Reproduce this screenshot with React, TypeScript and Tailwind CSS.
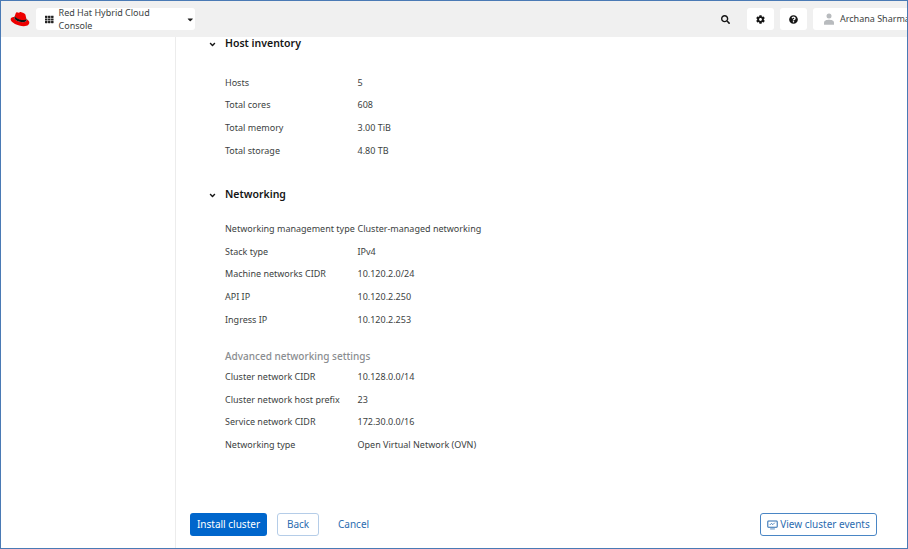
import { FaSearch, FaCog, FaQuestionCircle, FaCaretDown, FaAngleDown, FaTh } from "react-icons/fa";

const inventory = [
  ["Hosts", "5"],
  ["Total cores", "608"],
  ["Total memory", "3.00 TiB"],
  ["Total storage", "4.80 TB"],
];

const networking = [
  ["Networking management type", "Cluster-managed networking"],
  ["Stack type", "IPv4"],
  ["Machine networks CIDR", "10.120.2.0/24"],
  ["API IP", "10.120.2.250"],
  ["Ingress IP", "10.120.2.253"],
];

const advanced = [
  ["Cluster network CIDR", "10.128.0.0/14"],
  ["Cluster network host prefix", "23"],
  ["Service network CIDR", "172.30.0.0/16"],
  ["Networking type", "Open Virtual Network (OVN)"],
];

function Rows({ rows }: { rows: string[][] }) {
  return (
    <div className="flex flex-col">
      {rows.map(([label, value]) => (
        <div key={label} className="flex h-[22.8px] items-center text-[9px] text-[#3c3f42]">
          <span className="w-[132.5px] shrink-0">{label}</span>
          <span>{value}</span>
        </div>
      ))}
    </div>
  );
}

function Section({ title }: { title: string }) {
  return (
    <div className="flex h-[14px] items-center text-[#151515]">
      <FaAngleDown className="ml-[-17px] mr-[8px] h-[9px] w-[9px]" />
      <span className="text-[10.5px] font-semibold">{title}</span>
    </div>
  );
}

function RedHat() {
  return (
    <svg viewBox="0 0 32 24" className="h-[15px] w-[20px]">
      <path
        fill="#e00"
        d="M21 13c2 0 5-.3 5-2.800 0-.2 0-.4-.1-.6L24.700 4.400C24.400 3.300 24.200 2.800 22.200 1.800 20.700 1 17.300 0 16.300 0c-1 0-1.200 1.200-2.300 1.200C12.900 1.200 12.100.3 11.100.3c-1 0-1.600.7-2.100 2 0 0-1.300 3.800-1.500 4.400v.3c0 1.500 5.800 6 13.500 6zm5.200-1.800c.3 1.300.3 1.500.3 1.600 0 2.200-2.500 3.500-5.800 3.500C13.200 16.300 6.900 12 6.900 9.200c0-.4.100-.8.300-1.200C4.500 8.100 1 8.600 1 11.600 1 16.600 12.700 22.700 22 22.700c7.100 0 8.900-3.200 8.900-5.800 0-2-1.800-4.300-4.700-5.700z"
      />
      <path fill="#111" d="M26.200 11.200c.3 1.300.3 1.500.3 1.600 0 2.200-2.500 3.500-5.800 3.500C13.200 16.300 6.900 12 6.900 9.200c0-.4.100-.8.300-1.200l.6-1.500v.4c0 1.500 5.800 6 13.200 6 2 0 5-.300 5-2.800z" />
    </svg>
  );
}

export default function App() {
  return (
    <div className="flex h-[549px] w-[908px] flex-col overflow-hidden border border-[#4a7ab5] bg-white font-['Noto_Sans',sans-serif]">
      <header className="flex h-[36px] shrink-0 items-center bg-[#f0f0f0]">
        <div className="ml-[9px] mr-[6px]">
          <RedHat />
        </div>
        <div className="flex h-[22px] w-[159px] items-center rounded-[3px] bg-white pl-[9px] text-[9px] text-[#3c3f42]">
          <FaTh className="h-[9px] w-[9px] text-[#222]" />
          <span className="ml-[5px]">Red Hat Hybrid Cloud Console</span>
          <FaCaretDown className="ml-[7px] h-[9px] w-[9px] text-[#222]" />
        </div>
        <div className="ml-auto flex items-center">
          <FaSearch className="mr-[17px] h-[9px] w-[9px] text-[#151515]" />
          <div className="mr-[6px] flex h-[22px] w-[27px] items-center justify-center rounded-[3px] bg-white">
            <FaCog className="h-[9px] w-[9px] text-[#151515]" />
          </div>
          <div className="mr-[6px] flex h-[22px] w-[27px] items-center justify-center rounded-[3px] bg-white">
            <FaQuestionCircle className="h-[9px] w-[9px] text-[#151515]" />
          </div>
          <div className="flex h-[22px] w-[94px] items-center rounded-l-[3px] bg-white pl-[11px] text-[9px] text-[#3c3f42]">
            <svg viewBox="0 0 12 14" className="mr-[6px] h-[12px] w-[10px] shrink-0 fill-[#b8bbbe]">
              <circle cx="6" cy="3.500" r="3" />
              <path d="M0 14v-2.500C0 9 3 8 6 8s6 1 6 3.500V14z" />
            </svg>
            <span className="whitespace-nowrap">Archana Sharma</span>
          </div>
        </div>
      </header>
      <div className="flex min-h-0 flex-1">
        <aside className="w-[175px] shrink-0 border-r border-[#ececec]" />
        <main className="flex min-w-0 flex-1 flex-col">
          <div className="flex-1 pl-[49px]">
            <Section title="Host inventory" />
            <div className="mt-[20px]">
              <Rows rows={inventory} />
            </div>
            <div className="mt-[26px]">
              <Section title="Networking" />
            </div>
            <div className="mt-[15px]">
              <Rows rows={networking} />
            </div>
            <div className="mt-[18px] text-[10px] font-medium text-[#8a8d90]">Advanced networking settings</div>
            <div className="mt-[1px]">
              <Rows rows={advanced} />
            </div>
          </div>
          <footer className="flex items-center justify-between pb-[12px] pl-[14px] pr-[30px]">
            <div className="flex items-center">
              <button className="h-[23px] w-[77px] rounded-[3px] bg-[#0066cc] text-[10px] text-white">Install cluster</button>
              <button className="ml-[10px] h-[23px] w-[42px] rounded-[3px] border border-[#b5cde8] text-[10px] text-[#2b6cb0]">Back</button>
              <button className="ml-[19px] text-[10px] text-[#2b6cb0]">Cancel</button>
            </div>
            <button className="flex h-[23px] w-[117px] items-center justify-center rounded-[3px] border border-[#4a86c5] text-[10px] text-[#2b6cb0]">
              <svg viewBox="0 0 14 12" className="mr-[2px] h-[10px] w-[11px] fill-none stroke-[#2b6cb0]">
                <rect x="1" y="1" width="12" height="8" rx="1" strokeWidth="1.300" />
                <path d="M4 11h6M3.500 6l2-2 2 1.500 2.500-2.500" strokeWidth="1" />
              </svg>
              View cluster events
            </button>
          </footer>
        </main>
      </div>
    </div>
  );
}
